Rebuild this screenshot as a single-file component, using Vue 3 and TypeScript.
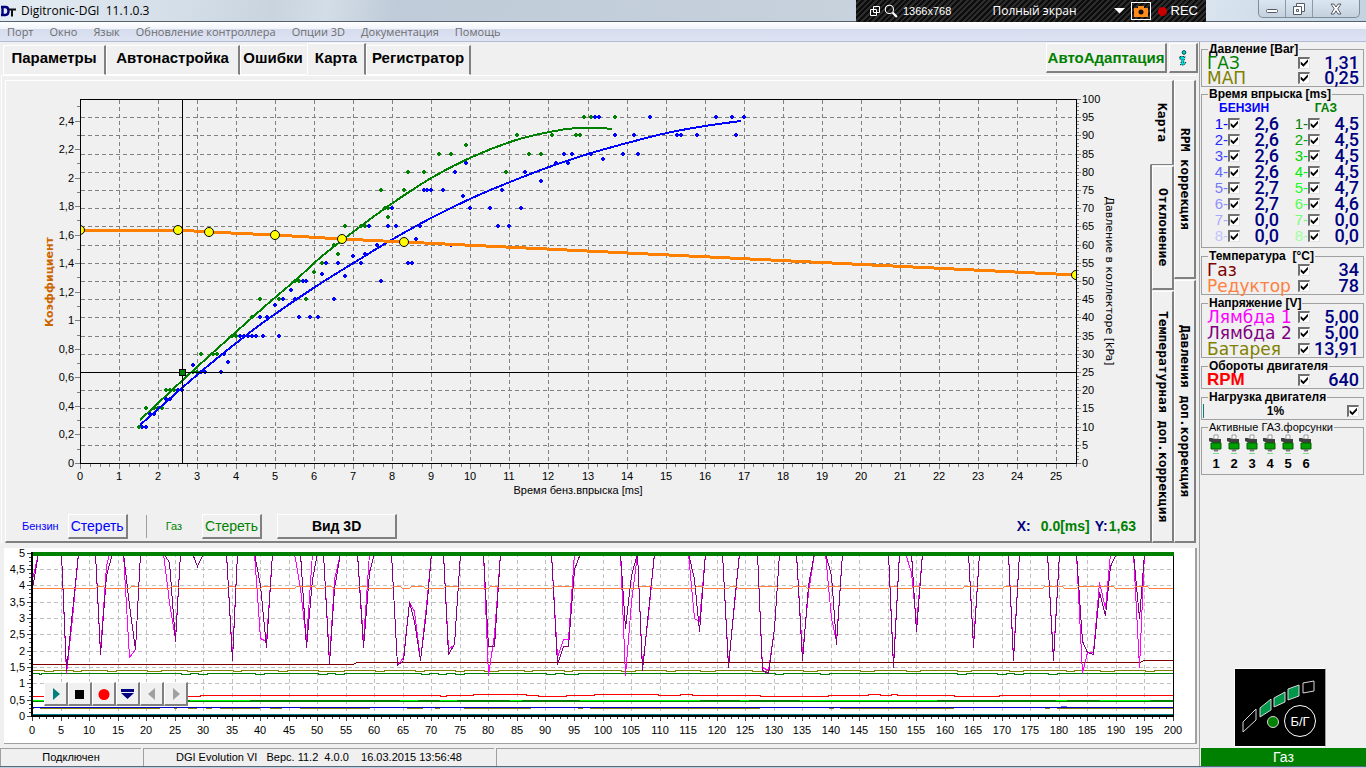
<script setup lang="ts">
import { reactive, ref } from 'vue'

type Pt = [number, number]

const menu = ['Порт', 'Окно', 'Язык', 'Обновление контроллера', 'Опции 3D', 'Документация', 'Помощь']
const tabs = ['Параметры', 'Автонастройка', 'Ошибки', 'Карта', 'Регистратор']
const activeTab = ref('Карта')
const innerTabs = ['Карта', 'Отклонение', 'Температурная доп.коррекция']
const outerTabs = ['RPM коррекция', 'Давления доп.коррекция']

/* ---------- calibration map ---------- */
const mx = (t: number) => Math.round(80 + t * 39.04)
const mk = (k: number) => Math.round(463 - k * 3.64)
const mc = (c: number) => Math.round(463 - c * 142.7)
const range = (n: number, from = 0, step = 1) => Array.from({ length: n }, (_, i) => from + i * step)
const comma = (v: number) => String(Math.round(v * 10) / 10).replace('.', ',')

const expand = (rows: [number, number[]][]): Pt[] => rows.flatMap(([k, ts]) => ts.map((t): Pt => [t, k]))
const gasDots = expand([
  [95, [12.9, 13.1, 13.7]], [90, [11.2, 12.1, 12.7, 12.8]], [87.5, [9.9]], [85, [9.2, 9.5, 11.5, 11.8]],
  [80, [8.4, 8.8, 10.9]], [75, [7.7, 8.3]], [70, [7.8, 7.9]], [67.5, [7.9]], [65, [6.8, 7.2, 7.3]],
  [60, [6.5]], [57.5, [6.6]], [55, [6.2]], [52.5, [6]], [50, [5.5, 5.6]], [45, [4.6, 5.1, 5.8]],
  [40, [4.4]], [35, [3.9, 4]], [30, [3.1, 3.4, 3.5]], [25, [2.9, 3]], [20, [2.2, 2.3, 2.4]],
  [15, [1.7, 1.9, 2, 2.1]], [10, [1.5]],
])
const petrolDots = expand([
  [95, [13.2, 13.3, 14.6, 16.3, 16.7, 17]], [90, [13.7, 14.2, 15.3, 15.4, 15.8, 16.8]],
  [85, [12.4, 12.6, 13.1, 13.9, 14.3]], [83.4, [13.4]], [82.5, [9.9, 12.2, 12.5]], [80, [9.6, 11.4]],
  [77.5, [11.8]], [75, [8.8, 8.9, 9, 9.3, 10.8]], [73.3, [9.8]], [70, [8, 10, 10.5, 11.3]],
  [65, [7.4, 7.9, 8.1, 8.7, 10.7, 11]], [61.5, [8.6]], [60, [7.6, 9.5]], [57.5, [7.3]], [56.8, [7]],
  [55, [6.3, 6.6, 7.2, 8.4, 8.5]], [51.8, [6.2]], [51.5, [6.8]], [50, [5.7, 5.8, 7.7]], [47.5, [5.4]],
  [45, [5.2, 5.5, 6.5]], [43.3, [5]], [40, [4.6, 4.8, 5.6, 5.9, 6.1]],
  [35, [4.1, 4.2, 4.3, 4.4, 4.5, 4.7, 5.1]], [30, [3.5, 3.7]], [27.7, [3.8]], [27, [2.9]],
  [25, [3, 3.1, 3.2, 3.6]], [20, [2.4, 2.5, 2.6]], [17.5, [2.2, 2.3]], [15, [2]], [13.5, [1.8, 1.9]],
  [10, [1.6, 1.7]],
])
const dot = (p: Pt) => {
  const x = mx(p[0]), y = mk(p[1])
  return `M${x - 2} ${y - 1}h1v-1h2v1h1v2h-1v1h-2v-1h-1z`
}
const dots = (ps: Pt[]) => ps.map(dot).join('')

const smooth = (p: Pt[]) => {
  let d = `M${p[0][0]} ${p[0][1]}`
  for (let i = 0; i < p.length - 1; i++) {
    const a = p[Math.max(0, i - 1)], b = p[i], c = p[i + 1], e = p[Math.min(p.length - 1, i + 2)]
    d += `C${b[0] + (c[0] - a[0]) / 6} ${b[1] + (c[1] - a[1]) / 6} ${c[0] - (e[0] - b[0]) / 6} ${c[1] - (e[1] - b[1]) / 6} ${c[0]} ${c[1]}`
  }
  return d
}
const petrolCurve = smooth([[140, 425], [197, 375], [235, 344], [268, 319], [315, 287], [360, 259], [393, 239], [433, 217], [472, 198], [510, 182], [549, 167], [588, 154], [627, 143], [667, 133], [705, 126], [741, 121]])
const gasCurve = smooth([[140, 420], [197, 367], [263, 308], [298, 278], [321, 257], [353, 232], [380, 212], [400, 198], [433, 177], [472, 157], [513, 141], [549, 132], [577, 128], [600, 128], [612, 129]])
const knots: Pt[] = [[80, 230], [178, 230], [209, 232], [275, 235], [342, 239], [404, 242], [1076, 275]]

/* ---------- recorder ---------- */
const rx = (i: number) => Math.round(32 + i * 5.705)
const ry = (v: number) => Math.round(716 - v * 32.7)
const trace = (s: string) =>
  s.trim().split(/\s+/).map((q) => {
    const [i, v] = q.split(':').map(Number)
    return `${rx(i)},${ry(v)}`
  }).join(' ')

const lambda2 = trace(`0:3.9 1:5 5:5 6:1.4 7:3.2 8:5 11:5 12:1.9 13:4.3 14:5 16:5 17:3.4 18:2.05 19:5 23:5 24:4.7 25:2.3 26:5
28:5 29:4.6 30:5 34:5 35:1.7 36:5 39:5 40:4 41:2.1 42:5 47:5 48:2.1 49:4.2 50:5 51:5 52:1.6 53:3.9 54:5 57:5 58:2.1 59:4.4 60:5
63:5 64:1.55 65:1.7 66:3.5 67:2.9 68:1.7 69:3.2 70:5 72:5 73:1.9 74:2.2 75:5 79:5 80:2.15 81:2.15 82:5 91:5 92:1.6 93:2.15 94:2.15 95:4.5 96:5
103:5 104:2.7 105:4.3 106:5 107:1.4 108:3.2 109:5 115:5 116:4.2 117:2.6 118:5 121:5 122:1.5 123:3.5 124:5 127:5 128:1.4 129:1.3 130:2.7 131:5
134:5 135:1.7 136:4 137:5 139:5 140:4.3 141:2.2 142:5 150:5 151:1.5 152:5 154:5 155:2.6 156:5 164:5 165:2.1 166:5 171:5 172:1.7 173:5
178:5 179:1.7 180:5 183:5 184:2.3 185:1.95 186:1.9 187:3.8 188:3.1 189:4.6 190:5 193:5 194:3 195:5 200:5`)
const lambda1 = trace(`0:4.2 1:5 5:5 6:1.3 7:3 8:5 11:5 12:2 13:4.6 13.5:5 16:5 17:1.8 18:2.05 19:5 23:5 24:3.5 25:2.4 26:5
34:5 35:1.8 36:5 39:5 40:2.4 41:2.3 42:5 46:5 47:3.9 48:2.3 49:5 51:5 52:1.7 53:4.2 54:5 57:5 58:2.3 59:5
63:5 64:1.55 65:1.8 66:3.5 67:3.2 68:1.7 69:3.4 70:5 72:5 73:2.05 74:2.2 75:5 79:5 80:1.25 81:2.5 82:5 91:5 92:1.8 93:2.35 94:2.35 95:5
103:5 104:1.25 105:3.5 106:5 107:1.5 108:3.1 109:5 115:5 116:3 117:2.9 118:5 121:5 122:1.6 123:3.4 124:5 127:5 128:1.5 129:1.4 130:2.7 131:5
134:5 135:1.9 136:3.8 137:5 139:5 140:3 141:2.3 142:5 150:5 151:1.6 152:5 153:5 154:4.4 155:2.8 156:5 164:5 165:2.2 166:5 171:5 172:1.8 173:5
178:5 179:1.8 180:5 183:5 184:1.3 185:1.95 186:1.95 187:4.1 188:3.3 189:5 193:5 194:1.5 195:5 200:5`)

/* A flat trace with short steps of dy pixels over the listed samples. */
const stepped = (y: number, dy: number, spans: Pt[]) => {
  let d = `M32 ${y}`
  for (const [a, b] of spans) d += `H${rx(a)}L${rx(a) + 3} ${y + dy}H${rx(b) - 3}L${rx(b)} ${y}`
  return d + 'H1173'
}
const reducer = stepped(588, -2, [[11, 13], [17, 19], [24, 26], [34, 36], [40, 42], [46, 50], [51, 53], [57, 59], [63, 65], [66, 69], [72, 75], [80, 82], [91, 95], [106, 109], [116, 118], [122, 124], [127, 131], [133, 136], [139, 142], [150, 152], [154, 156], [163, 166], [170, 173], [177, 181], [183, 190], [193, 196]])
const battery = stepped(670, 1, [[2, 4], [7, 9], [13, 15], [20, 23], [27, 30], [35, 37], [43, 45], [50, 55], [60, 62], [67, 69], [74, 76], [79, 82], [86, 88], [93, 95], [103, 106], [111, 113], [117, 120], [126, 129], [135, 138], [145, 148], [153, 156], [162, 165], [171, 174], [181, 183], [187, 190], [195, 197]])
const gasPressure = stepped(673, 1, [[1, 2], [26, 28], [29, 31], [39, 41], [50, 52], [53, 55], [68, 70], [71, 73], [74, 76], [90, 92], [93, 96], [130, 132], [138, 140], [162, 164], [169, 171], [172, 174], [178, 180]])
const rpm = 'M32 696H200V695H440V696H446V695H473V694H526V695H538V696H566V695H594V694H658V695H680V694H692V695H760V696H828V695H868V694H880V695H891V694H897V695H954V696H999V695H1173'

/* ---------- side panel ---------- */
const pressure = reactive([
  { name: 'ГАЗ', cls: 'c-green', value: '1,31', on: true },
  { name: 'МАП', cls: 'c-olive', value: '0,25', on: true },
])
const temperature = reactive([
  { name: 'Газ', cls: 'c-maroon', value: '34', on: true },
  { name: 'Редуктор', cls: 'c-coral', value: '78', on: true },
])
const voltage = reactive([
  { name: 'Лямбда 1', cls: 'c-magenta', value: '5,00', on: true },
  { name: 'Лямбда 2', cls: 'c-purple', value: '5,00', on: true },
  { name: 'Батарея', cls: 'c-olive', value: '13,91', on: true },
])
const speed = reactive([{ name: 'RPM', cls: 'c-red', value: '640', on: true }])
const groups = [
  { title: 'Температура  [°C]', rows: temperature },
  { title: 'Напряжение [V]', rows: voltage },
  { title: 'Обороты двигателя', rows: speed },
]
const injection = reactive(
  ([['2,6', '4,5'], ['2,6', '4,5'], ['2,6', '4,5'], ['2,6', '4,5'], ['2,7', '4,7'], ['2,7', '4,6'], ['0,0', '0,0'], ['0,0', '0,0']])
    .map(([petrol, gas]) => ({ petrol, gas, petrolOn: true, gasOn: true })),
)
const loadOn = ref(true)
</script>

<template>
  <div class="app">
    <header class="titlebar">
      <svg class="logo" viewBox="0 0 16 12" aria-hidden="true">
        <path d="M2.500 2v8M1 2h4.500q3 0 3 4t-3 4H1" fill="none" stroke="#000080" stroke-width="2.400" />
        <path d="M9 4.500h7M12 4.500v7" fill="none" stroke="#111" stroke-width="2" />
      </svg>
      <h1>Digitronic-DGI&nbsp; 11.1.0.3</h1>
      <div class="capture">
        <svg class="cap-win" viewBox="0 0 12 12" fill="none" stroke="#fff" aria-hidden="true"><path d="M4.500 1.500h6v6h-6zM1.500 4.500h6v6h-6z" /></svg>
        <svg class="cap-zoom" viewBox="0 0 13 13" fill="none" stroke="#fff" aria-hidden="true"><circle cx="5" cy="5" r="3.800" /><path d="M8 8l4 4" stroke-width="2" /></svg>
        <span class="cap-size">1366x768</span>
        <span class="cap-mode">Полный экран</span>
        <svg class="cap-arrow" viewBox="0 0 12 6" aria-hidden="true"><path d="M0 0h11L5.500 5.500z" fill="#fff" /></svg>
        <button class="cap-cam" aria-label="Снимок">
          <svg viewBox="0 0 14 11" aria-hidden="true"><path d="M0 2h4V0h6v2h4v9H0z" fill="#ff8c1a" /><circle cx="7" cy="6" r="2.500" fill="#111" /></svg>
        </button>
        <button class="cap-rec"><i></i>REC</button>
      </div>
      <div class="winctl">
        <button aria-label="Свернуть"><svg viewBox="0 0 14 12"><rect x="1.500" y="6.500" width="11" height="3" rx="1" fill="#fff" stroke="#555c66" /></svg></button>
        <button aria-label="Развернуть"><svg viewBox="0 0 14 12" fill="#fff" stroke="#555c66"><path d="M4.500.500h8v8h-8z" /><path d="M1.500 3.500h8v8h-8z" /><path d="M4.500 6.500h2v2h-2z" /></svg></button>
        <button class="wide" aria-label="Закрыть"><svg viewBox="0 0 14 12"><path d="M2 1h3l2 3 2-3h3L8.800 5.800 12 11H9L7 7.800 5 11H2l3.200-5.200z" fill="#fff" stroke="#555c66" /></svg></button>
      </div>
    </header>
    <nav class="menu"><a v-for="m in menu" :key="m" href="#">{{ m }}</a></nav>

    <div class="body">
      <main class="work">
        <div class="top">
          <div class="tabs">
            <button v-for="t in tabs" :key="t" :class="{ on: t === activeTab }" @click="activeTab = t">{{ t }}</button>
          </div>
          <button class="raised adapt">АвтоАдаптация</button>
          <button class="raised info" aria-label="Информация">
            <svg viewBox="0 0 10 16" aria-hidden="true">
              <circle cx="6" cy="2.500" r="1.800" fill="#00e0e0" stroke="#003c3c" />
              <path d="M2 6.500h5l-1.500 6h2.500l-2 2.500H2.500l1.500-6H1.500z" fill="#00e0e0" stroke="#003c3c" stroke-dasharray="1.500 1" />
            </svg>
          </button>
        </div>

        <div class="frame">
          <section class="panel">
            <svg class="chart" viewBox="6 81 1144 430" role="img" aria-label="Карта">
              <defs>
                <clipPath id="map-area"><rect x="80" y="99" width="997" height="365" /></clipPath>
              </defs>
              <g class="crisp grid">
                <path v-for="i in 25" :key="'v' + i" :d="`M${mx(i)}.5 100V463`" />
                <path v-for="i in 19" :key="'h' + i" :d="`M81 ${mk(i * 5)}.5H1076`" />
              </g>
              <g clip-path="url(#map-area)" class="crisp">
                <path :d="dots(petrolDots)" fill="#00f" />
                <path :d="dots(gasDots)" fill="#008000" />
                <path :d="petrolCurve" class="curve" stroke="#00f" />
                <path :d="gasCurve" class="curve" stroke="#008000" />
                <polyline :points="knots.map((p) => p.join()).join(' ')" class="coef" />
              </g>
              <g clip-path="url(#map-area)">
                <circle v-for="k in knots" :key="k[0]" :cx="k[0]" :cy="k[1]" r="4.500" fill="#ff0" stroke="#000" />
              </g>
              <g class="crisp">
                <path d="M182.500 99V463M80 372.500H1076" stroke="#000" />
                <rect x="179.500" y="369.500" width="6" height="6" fill="#008000" stroke="#000" />
                <path d="M80.500 463.500V99.500H1076.500V463.500Z" fill="none" stroke="#000" />
                <g stroke="#808080">
                  <path v-for="i in range(26, 0, 0.1)" :key="'l' + i" :d="`M80 ${mc(i)}.5h${Math.round(i * 10) % 2 ? -3 : -5}`" />
                  <path v-for="i in range(103, 0, 0.25)" :key="'b' + i" :d="`M${mx(i)}.5 464v${i % 1 ? 3 : 5}`" />
                  <path v-for="i in range(101)" :key="'r' + i" :d="`M1077 ${mk(i)}.5h${i % 5 ? 2 : 4}`" />
                </g>
              </g>
              <g class="num">
                <text v-for="i in range(13, 0, 0.2)" :key="i" x="74" :y="mc(i) + 4" text-anchor="end">{{ comma(i) }}</text>
                <text v-for="i in range(26)" :key="i" :x="mx(i)" y="480" text-anchor="middle">{{ i }}</text>
                <text v-for="i in range(21, 0, 5)" :key="i" x="1082" :y="mk(i) + 4">{{ i }}</text>
                <text x="578" y="494" text-anchor="middle">Время бенз.впрыска [ms]</text>
              </g>
              <text class="axis-coef" transform="translate(53 282) rotate(-90)" text-anchor="middle">Коэффициент</text>
              <text class="axis-kpa" transform="translate(1106 281) rotate(90)" text-anchor="middle">Давление в коллекторе [kPa]</text>
            </svg>
            <div class="actions">
              <span class="lbl c-blue">Бензин</span>
              <button class="raised wipe c-blue">Стереть</button>
              <i class="rule"></i>
              <span class="lbl c-green">Газ</span>
              <button class="raised wipe c-green">Стереть</button>
              <button class="raised view3d">Вид 3D</button>
              <output class="coords"><b class="c-navy">X:</b><b class="c-green gap-x">0.0[ms]</b><b class="c-navy">Y:</b><b class="c-green">1,63</b></output>
            </div>
          </section>
          <div class="vtabs inner">
            <button v-for="(t, i) in innerTabs" :key="t" :class="['vt' + i, { on: i === 0 }]">{{ t }}</button>
          </div>
          <div class="vtabs outer">
            <button v-for="(t, i) in outerTabs" :key="t" :class="'vo' + i">{{ t }}</button>
          </div>
        </div>

        <section class="recorder">
          <svg class="chart" viewBox="4 548 1191 195" role="img" aria-label="Регистратор">
            <defs>
              <clipPath id="rec-area"><rect x="32" y="552" width="1142" height="165" /></clipPath>
            </defs>
            <g class="crisp rgrid">
              <path v-for="i in 39" :key="'v' + i" :d="`M${rx(i * 5)}.5 553V716`" />
              <path v-for="i in 9" :key="'h' + i" :d="`M33 ${ry(i / 2)}.5H1173`" />
            </g>
            <g class="crisp line" clip-path="url(#rec-area)">
              <path :d="battery" stroke="#808000" transform="translate(0 .5)" />
              <path :d="gasPressure" stroke="#008000" transform="translate(0 .5)" />
              <path :d="rpm" stroke="#f00" transform="translate(0 .5)" />
              <path d="M32 701H1173" stroke="#008000" stroke-width="2" />
              <path d="M32 700.500h30M190 700.500h60M400 700.500h18M440 700.500h17M510 700.500h12M580 700.500h120M740 700.500h9M800 700.500h137M1056 700.500h11M1100 700.500h50" stroke="#0f0" />
              <path d="M32 708.500h2M40 708.500h120M174 708.500h3M188 708.500h9M206 708.500h6M220 708.500h40M270 708.500h12M300 708.500h70M407 708.500h16M435 708.500h5M464 708.500h67M578 708.500h5M590 708.500h170M829 708.500h5M840 708.500h114M1045 708.500h5M1057 708.500h116" stroke="#808000" />
              <path d="M32 707.500H1173" stroke="#00c" />
              <path d="M1061 706.500h6" stroke="#6060ff" />
              <path d="M32 664.500H353L357 662.500H1140L1144 660.500H1173" stroke="#800000" />
              <polyline :points="lambda1" stroke="#f0f" transform="translate(.5 .5)" />
              <polyline :points="lambda2" stroke="#800080" transform="translate(.5 .5)" />
              <path :d="reducer" stroke="#ff8040" transform="translate(0 .5)" />
              <path d="M32 714.500H1173" stroke="#008080" />
            </g>
            <g class="crisp">
              <rect x="31" y="552" width="2" height="165" />
              <rect x="31" y="715" width="1143" height="2" />
              <rect x="1173" y="552" width="1" height="165" />
              <rect x="33" y="552" width="1141" height="4" fill="#008000" />
              <g stroke="#404040">
                <path v-for="i in range(41, 0, 0.125)" :key="'l' + i" :d="`M31 ${ry(i)}.5h${i % 0.5 ? -2 : -4}`" />
                <path v-for="i in range(161, 0, 1.25)" :key="'b' + i" :d="`M${rx(i)}.5 717v${i % 5 ? 2 : 4}`" />
              </g>
            </g>
            <g class="num">
              <text v-for="i in range(11, 0, 0.5)" :key="i" x="25" :y="ry(i) + 4" text-anchor="end">{{ comma(i) }}</text>
              <text v-for="i in range(41, 0, 5)" :key="i" :x="rx(i)" y="734" text-anchor="middle">{{ i }}</text>
            </g>
          </svg>
          <div class="player">
            <button aria-label="Старт"><svg viewBox="0 0 14 14"><path d="M4 1l7 6-7 6z" fill="#008080" /></svg></button>
            <button aria-label="Стоп"><svg viewBox="0 0 14 14"><path d="M2 3h9v9H2z" /></svg></button>
            <button aria-label="Запись"><svg viewBox="0 0 14 14"><circle cx="7" cy="7.500" r="5.500" fill="#f00" /></svg></button>
            <button aria-label="Сохранить"><svg viewBox="0 0 14 14"><path d="M0 2h13v3H0zM0 6h13L6.500 12z" fill="#000080" /></svg></button>
            <button aria-label="Назад"><svg viewBox="0 0 14 14"><path d="M10 1L3 7l7 6z" fill="#a0a0a0" /></svg></button>
            <button aria-label="Вперёд"><svg viewBox="0 0 14 14"><path d="M4 1l7 6-7 6z" fill="#a0a0a0" /></svg></button>
          </div>
        </section>

        <footer class="status">
          <span class="conn">Подключен</span>
          <span class="fw">DGI Evolution VI&nbsp;&nbsp; Верс. 11.2&nbsp; 4.0.0&nbsp;&nbsp;&nbsp; 16.03.2015 13:56:48</span>
          <span class="rest"></span>
        </footer>
      </main>

      <aside class="side">
        <fieldset class="press">
          <legend>Давление [Bar]</legend>
          <label v-for="r in pressure" :key="r.name" class="row"><span :class="['nm', r.cls]">{{ r.name }}</span><input v-model="r.on" type="checkbox"><span class="val">{{ r.value }}</span></label>
        </fieldset>
        <fieldset class="inj">
          <legend>Время впрыска [ms]</legend>
          <div class="heads"><b class="c-blue">БЕНЗИН</b><b class="c-green">ГАЗ</b></div>
          <div v-for="(r, i) in injection" :key="i" class="pair">
            <label><span :class="['ix', 'p' + i]">{{ i + 1 }}-</span><input v-model="r.petrolOn" type="checkbox"><span class="val">{{ r.petrol }}</span></label>
            <label><span :class="['ix', 'g' + i]">{{ i + 1 }}-</span><input v-model="r.gasOn" type="checkbox"><span class="val">{{ r.gas }}</span></label>
          </div>
        </fieldset>
        <fieldset v-for="g in groups" :key="g.title">
          <legend>{{ g.title }}</legend>
          <label v-for="r in g.rows" :key="r.name" class="row"><span :class="['nm', r.cls]">{{ r.name }}</span><input v-model="r.on" type="checkbox"><span class="val">{{ r.value }}</span></label>
        </fieldset>
        <fieldset class="load">
          <legend>Нагрузка двигателя</legend>
          <label class="row"><i class="bar"></i><b>1%</b><input v-model="loadOn" type="checkbox"></label>
        </fieldset>
        <fieldset class="active">
          <legend>Активные ГАЗ.форсунки</legend>
          <ol>
            <li v-for="n in 6" :key="n">
              <svg viewBox="0 0 14 22" aria-hidden="true">
                <path d="M5 1h4v4H5z" fill="#fff" stroke="#999" />
                <path d="M0 4l3 0 2 1h7v4H4L2 8 0 7z" fill="#404040" />
                <path d="M2 9h10v6H2z" fill="#00a000" stroke="#006000" />
                <path d="M4 15h6l-1 2H5z" fill="#777" />
                <path d="M5 17h4v1H5z" fill="#bbb" /><path d="M4 19h6v1H4z" fill="#7fd890" />
              </svg>
              <b>{{ n }}</b>
            </li>
          </ol>
        </fieldset>
        <button class="switch" aria-label="Бензин / Газ">
          <svg viewBox="0 0 90 76" aria-hidden="true">
            <g stroke="#d8d8d8">
              <path d="M8 52L21 39v11L8 62z" fill="#000" />
              <path d="M25 38l11-9v11l-11 7z" fill="#00974b" />
              <path d="M39 28l11-6v10l-11 5z" fill="#00974b" />
              <path d="M53 19l11-4v11l-11 4z" fill="#00974b" />
              <path d="M68 13l11-2v10l-11 2z" fill="#000" />
              <circle cx="38" cy="52" r="5.500" fill="#008000" />
              <circle cx="65" cy="51" r="15.500" fill="#000" stroke="#fff" />
            </g>
            <text x="65" y="56" text-anchor="middle">Б/Г</text>
          </svg>
        </button>
        <div class="fuel">Газ</div>
      </aside>
    </div>
    <div class="edge"></div>
  </div>
</template>

<style>
body { margin: 0; background: #f0f0f0; }
</style>

<style scoped>
* { box-sizing: border-box; }
button { font: inherit; padding: 0; border: 0; background: none; color: inherit; border-radius: 0; }
svg { display: block; }
.app {
  min-height: 100vh;
  display: flex;
  flex-direction: column;
  background: #f0f0f0;
  color: #000;
  font: 11px/14px "Liberation Sans", Arial, sans-serif;
}
.c-green { color: #008000; } .c-olive { color: #808000; } .c-maroon { color: #800000; }
.c-coral { color: #ff8040; } .c-magenta { color: #f0f; } .c-purple { color: #800080; }
.c-red { color: #f00; } .c-blue { color: #00f; } .c-navy { color: #000080; }

.titlebar {
  height: 22px;
  display: flex;
  align-items: flex-start;
  padding-right: 6px;
  border-bottom: 1px solid #53616e;
  background: linear-gradient(100deg, #e4ecf3 0, #d3dde7 14%, #c9d4df 20%, #d3dde7 24%, #bfcbd8 29%, #c6d1dc 60%, #d9e4ee 88%, #c3d3e2 100%);
}
.logo { width: 16px; height: 12px; margin-top: 5px; }
h1 { margin: 3px 0 0 5px; font: 12px/16px "Open Sans", "Noto Sans", sans-serif; }
.capture {
  margin-left: auto;
  margin-right: 52px;
  width: 350px;
  height: 22px;
  display: flex;
  align-items: center;
  padding: 0 8px 0 13px;
  color: #fff;
  font: 12px/16px "Open Sans", "Noto Sans", sans-serif;
  background: repeating-linear-gradient(135deg, #0c0c0c 0 2px, #2c2c2c 2px 4px);
  white-space: nowrap;
}
.cap-win { width: 12px; height: 12px; }
.cap-zoom { width: 14px; height: 14px; margin-left: 3px; }
.cap-size { margin-left: 5px; font: 11px/16px "Liberation Sans", Arial, sans-serif; }
.cap-mode { margin-left: auto; margin-right: 37px; }
.cap-arrow { width: 12px; height: 6px; margin-right: 5px; }
.cap-cam { width: 20px; height: 18px; border: 1px solid #fff; display: grid; place-items: center; }
.cap-cam svg { width: 14px; height: 11px; }
.cap-rec { display: flex; align-items: center; gap: 4px; margin-left: 7px; font: 13px/16px "Liberation Sans", sans-serif; }
.cap-rec i { width: 9px; height: 9px; border-radius: 50%; background: #c80000; }
.winctl { display: flex; height: 18px; border: 1px solid #7f8c99; border-top: 0; border-radius: 0 0 5px 5px; background: linear-gradient(#dbe6f0, #c4d1de); }
.winctl button { width: 27px; display: grid; place-items: center; border-right: 1px solid #8c99a6; }
.winctl .wide { width: 46px; border: 0; }
.winctl svg { width: 14px; height: 12px; }

.menu {
  height: 20px;
  display: flex;
  gap: 16px;
  padding-left: 7px;
  border-bottom: 1px solid #b4bbd6;
  background: linear-gradient(#fff 0, #f1f4fa 36%, #d5dced 37%, #dfe4f4 100%);
  font: 11px/19px "Open Sans", "Noto Sans", sans-serif;
}
.menu a { color: #6d6d6d; text-decoration: none; }

.body { flex: 1; display: flex; }
.work { flex: 1; min-width: 0; display: flex; flex-direction: column; border-right: 1px solid #a0a0a0; }
.top { height: 33px; display: flex; align-items: flex-start; padding: 1px 1px 0 3px; }
.tabs { flex: 1; display: grid; grid-template-columns: 103px 134px 67px 59px 105px; align-items: end; height: 32px; }
.tabs button {
  height: 30px;
  font: bold 15px/24px "Liberation Sans", Arial, sans-serif;
  border: solid;
  border-width: 1px 2px 1px 1px;
  border-color: #fff #808080 #fff #fff;
  white-space: nowrap;
  padding-bottom: 4px;
}
.tabs button:nth-child(3) { border-right-color: #f0f0f0; }
.tabs button.on { height: 32px; border-bottom-color: #f0f0f0; padding-bottom: 2px; }
.raised {
  border: solid;
  border-width: 1px 2px 2px 1px;
  border-color: #fff #808080 #808080 #fff;
  background: #f0f0f0;
  white-space: nowrap;
}
.adapt { width: 121px; height: 30px; color: #008000; font: bold 15px/26px "Liberation Sans", Arial, sans-serif; display: flex; justify-content: center; align-items: center; }
.info { width: 29px; height: 30px; margin-left: 2px; display: grid; place-items: center; }
.info svg { width: 10px; height: 16px; }

.frame { display: flex; margin: 0 3px 0 1px; padding: 4px 0 0 3px; border-left: 1px solid #fff; border-top: 1px solid #fff; }
.panel { flex: 1; min-width: 0; border: solid; border-width: 1px 2px 2px 1px; border-color: #fff #808080 #808080 #fff; }
.chart { width: 100%; height: auto; }
.crisp { shape-rendering: crispEdges; }
.grid { stroke: #808080; stroke-dasharray: 4 3; }
.rgrid { stroke: #c0c0c0; stroke-dasharray: 4 3; }
.curve { fill: none; stroke-width: 2; }
.coef { fill: none; stroke: #ff8000; stroke-width: 3; }
.line { fill: none; }
.num { font: 11px "Liberation Sans", Arial, sans-serif; }
.axis-coef { font: bold 11px "DejaVu Sans", sans-serif; fill: #c60; }
.axis-kpa { font: 11px "DejaVu Sans", sans-serif; }

.actions { height: 30px; display: flex; align-items: center; padding: 0 14px 0 16px; }
.lbl { font-size: 11px; }
.wipe { width: 60px; height: 25px; margin-left: 9px; font-size: 14px; display: flex; justify-content: center; align-items: center; }
.rule { width: 1px; height: 23px; background: #a0a0a0; margin: 0 19px 0 18px; }
.lbl.c-green + .wipe { margin-left: 20px; }
.view3d { width: 120px; height: 25px; margin-left: 15px; font: bold 14px/20px "Liberation Sans", Arial, sans-serif; }
.coords { margin-left: auto; font-size: 14px; display: flex; gap: 1px; }
.coords .gap-x { margin: 0 4px 0 9px; }

.vtabs { width: 22px; display: flex; flex-direction: column; gap: 1px; }
.vtabs button {
  writing-mode: vertical-rl;
  font: bold 13px/18px "DejaVu Sans Mono", monospace;
  border: solid;
  border-width: 1px 2px 2px 1px;
  border-color: #fff #808080 #808080 #fff;
  white-space: nowrap;
  text-align: center;
  min-height: 0;
}
.vt0 { flex: 84; } .vt1 { flex: 122; } .vt2 { flex: 252; }
.vtabs .vt0 { margin-left: -2px; background: #f0f0f0; border-left-color: #f0f0f0; border-bottom-width: 1px; }
.vo0 { flex: 198; } .vo1 { flex: 262; }

.recorder { position: relative; margin: 5px 2px 4px 4px; background: #fff; border-right: 2px solid #a0a0a0; border-bottom: 1px solid #a0a0a0; }
.player { position: absolute; left: 40px; bottom: 37px; display: flex; }
.player button { width: 24px; height: 24px; display: grid; place-items: center; background: #f0f0f0; border: solid; border-width: 1px 2px 2px 1px; border-color: #fff #808080 #808080 #fff; }
.player svg { width: 14px; height: 14px; }

.status { height: 18px; display: flex; gap: 2px; margin-top: auto; line-height: 17px; }
.status span { border: solid; border-width: 1px 0 0 1px; border-color: #a0a0a0; white-space: nowrap; }
.conn { width: 141px; text-align: center; }
.fw { width: 351px; text-align: center; }
.rest { flex: 1; }
.edge { height: 2px; background: #b9cde0; border-top: 1px solid #5a6a78; }

.side { width: 165px; display: flex; flex-direction: column; padding-top: 1px; margin-left: 1px; }
fieldset { margin: 0 2px 2px 0; padding: 0 4px 0 5px; border: 1px solid #a0a0a0; min-width: 0; }
legend { padding: 0 1px; margin-left: 1px; font: bold 12px/12px "Liberation Sans", Arial, sans-serif; white-space: pre; }
.row { display: flex; align-items: center; height: 16px; }
.press .row { height: 15px; }
.press { margin-bottom: 1px; padding-bottom: 1px; }
.inj { padding-bottom: 3px; }
.nm { font: 17px/16px "DejaVu Sans", sans-serif; white-space: nowrap; width: 91px; }
.nm.c-red { font: bold 17px/16px "Liberation Sans", Arial, sans-serif; }
.val { flex: 1; text-align: right; color: #000080; font: 500 18px/16px Roboto, "Liberation Sans", Arial, sans-serif; }
input {
  appearance: none;
  flex: none;
  width: 12px;
  height: 12px;
  margin: 0;
  background: #fff;
  border: solid;
  border-width: 2px 1px 1px 2px;
  border-color: #707070 #e3e3e3 #e3e3e3 #707070;
}
input:checked::before {
  content: "";
  display: block;
  width: 9px;
  height: 9px;
  background: #000;
  clip-path: polygon(8% 34%, 38% 60%, 88% 8%, 88% 38%, 38% 92%, 8% 64%);
}
.heads { display: flex; height: 16px; align-items: center; font: 12px/16px "Liberation Sans", Arial, sans-serif; padding: 0 22px 0 12px; justify-content: space-between; }
.pair { display: flex; height: 16px; }
.pair label { flex: 1; display: flex; align-items: center; }
.pair label:first-child { padding-right: 4px; }
.pair label + label { padding-left: 4px; }
.ix { width: 21px; text-align: right; font: 15px/16px "Liberation Sans", Arial, sans-serif; }
.p0 { color: #00f; } .p1 { color: #2828ff; } .p2 { color: #4848ff; } .p3 { color: #6464ff; }
.p4 { color: #7878ff; } .p5 { color: #9090ff; } .p6 { color: #a8a8ff; } .p7 { color: #c4c4ff; }
.g0 { color: #008000; } .g1 { color: #00a800; } .g2 { color: #00d000; } .g3 { color: #00f000; }
.g4 { color: #20ff20; } .g5 { color: #50ff50; } .g6 { color: #78ff78; } .g7 { color: #a0ffa0; }
.load { padding-left: 1px; margin-bottom: 1px; }
.load legend { margin-left: 5px; }
.load .bar { width: 1px; height: 14px; background: #008080; }
.load b { flex: 1; text-align: center; font-size: 12px; }
.active legend { font-weight: normal; font-size: 11px; }
ol { list-style: none; display: flex; gap: 4px; margin: 0; padding: 1px 0 2px 2px; }
li { width: 14px; text-align: center; }
li svg { width: 14px; height: 22px; }
li b { display: block; font-size: 13px; line-height: 16px; }
.switch { width: 92px; height: 79px; margin: auto 0 0 33px; border: 1px solid #fff; border-right-color: #a0a0a0; background: #000; display: block; }
.switch svg { width: 90px; height: 76px; }
.switch text { font: 13px "Liberation Sans", Arial, sans-serif; fill: #fff; }
.fuel { height: 18px; margin-top: 1px; background: #008000; color: #fff; text-align: center; font-size: 14px; line-height: 18px; }
</style>
